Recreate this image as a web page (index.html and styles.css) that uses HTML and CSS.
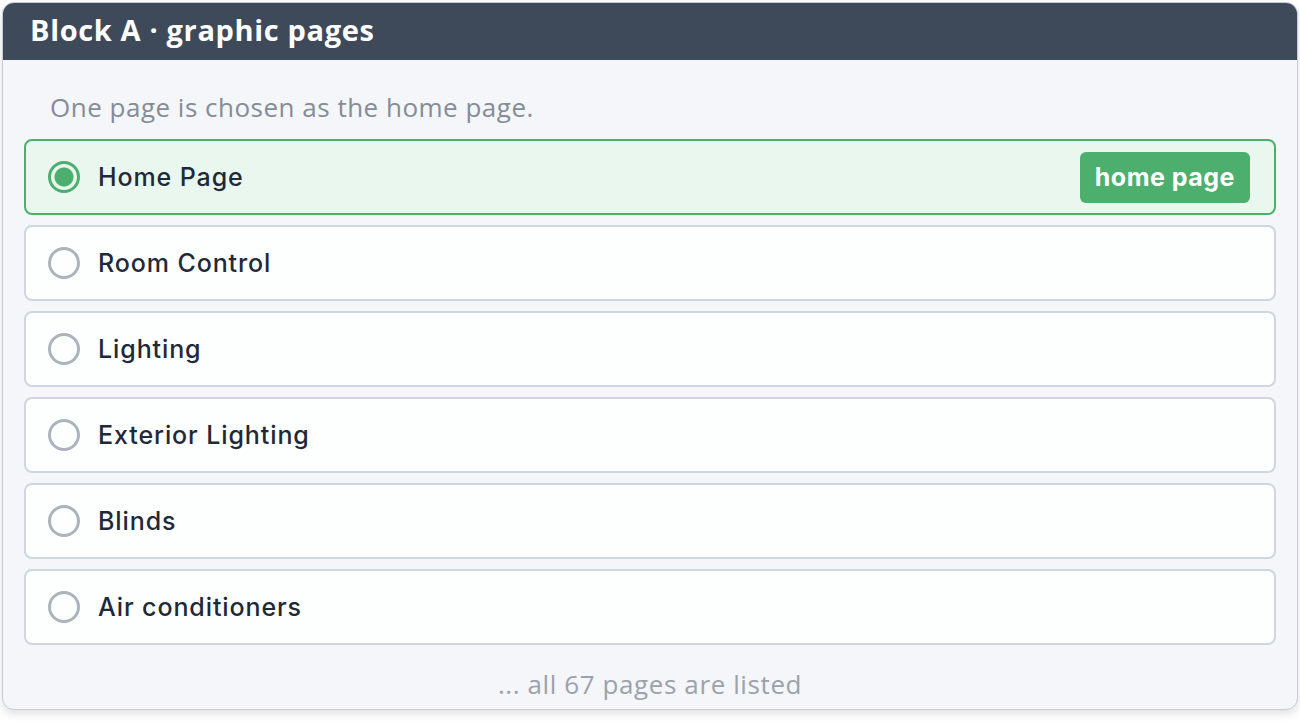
FILE: index.html
```html
<!DOCTYPE html>
<html lang="en">
<head>
    <meta charset="UTF-8">
    <meta name="viewport" content="width=device-width, initial-scale=1.0">
    <title>Block A - graphic pages</title>
    <link rel="stylesheet" href="styles.css">
</head>
<body>
    <div class="panel">
        <div class="panel-header">Block A · graphic pages</div>
        <div class="panel-body">
            <p class="hint">One page is chosen as the home page.</p>
            <ul class="pages">
                <li class="page selected">
                    <span class="radio"></span>
                    <span class="name">Home Page</span>
                    <span class="badge">home page</span>
                </li>
                <li class="page"><span class="radio"></span><span class="name">Room Control</span></li>
                <li class="page"><span class="radio"></span><span class="name">Lighting</span></li>
                <li class="page"><span class="radio"></span><span class="name">Exterior Lighting</span></li>
                <li class="page"><span class="radio"></span><span class="name">Blinds</span></li>
                <li class="page"><span class="radio"></span><span class="name">Air conditioners</span></li>
            </ul>
            <p class="more">... all 67 pages are listed</p>
        </div>
    </div>
</body>
</html>
```

FILE: styles.css
```css
* {
    margin: 0;
    padding: 0;
    box-sizing: border-box;
}
body {
    font-family: "Open Sans", sans-serif;
    background-color: #fff;
    padding: 2px;
    height: 100vh;
    overflow: hidden;
}
.panel {
    border: 1px solid #c5ccd6;
    border-radius: 12px;
    overflow: hidden;
    background-color: #f4f6f9;
    box-shadow: 0 4px 8px rgba(0, 0, 0, 0.12);
}
.panel-header {
    height: 57px;
    background-color: #3e4a5a;
    color: #fff;
    font-weight: 700;
    font-size: 29px;
    letter-spacing: 0.65px;
    line-height: 54px;
    padding-left: 27px;
}
.panel-body {
    padding: 30px 21px 8px;
}
.hint {
    font-size: 26px;
    letter-spacing: 0.5px;
    line-height: 34px;
    color: #858c96;
    padding-left: 26px;
}
.pages {
    list-style: none;
    margin-top: 15px;
    display: flex;
    flex-direction: column;
    gap: 10px;
}
.page {
    display: flex;
    align-items: center;
    height: 76px;
    border: 2px solid #cfd6df;
    border-radius: 8px;
    background-color: #fdfefe;
    padding: 0 24px 0 22px;
    font-family: Inter, sans-serif;
    font-weight: 500;
    font-size: 25px;
    letter-spacing: 0.9px;
    color: #1f2937;
}
.page.selected {
    border-color: #4caf6e;
    background-color: #e9f7ee;
}
.radio {
    width: 32px;
    height: 32px;
    border: 3px solid #adb3bb;
    border-radius: 50%;
    margin-right: 18px;
    flex-shrink: 0;
}
.selected .radio {
    border-color: #4caf6e;
    background: radial-gradient(circle, #4caf6e 0 9px, transparent 10px);
}
.name {
    flex: 1;
}
.badge {
    background-color: #4caf6e;
    color: #fff;
    font-weight: 700;
    font-size: 25px;
    letter-spacing: 0.5px;
    line-height: 51px;
    padding: 0 15px;
    border-radius: 6px;
}
.more {
    font-size: 26px;
    letter-spacing: 0.6px;
    line-height: 34px;
    color: #9ba2ac;
    text-align: center;
    margin-top: 22px;
}
```
